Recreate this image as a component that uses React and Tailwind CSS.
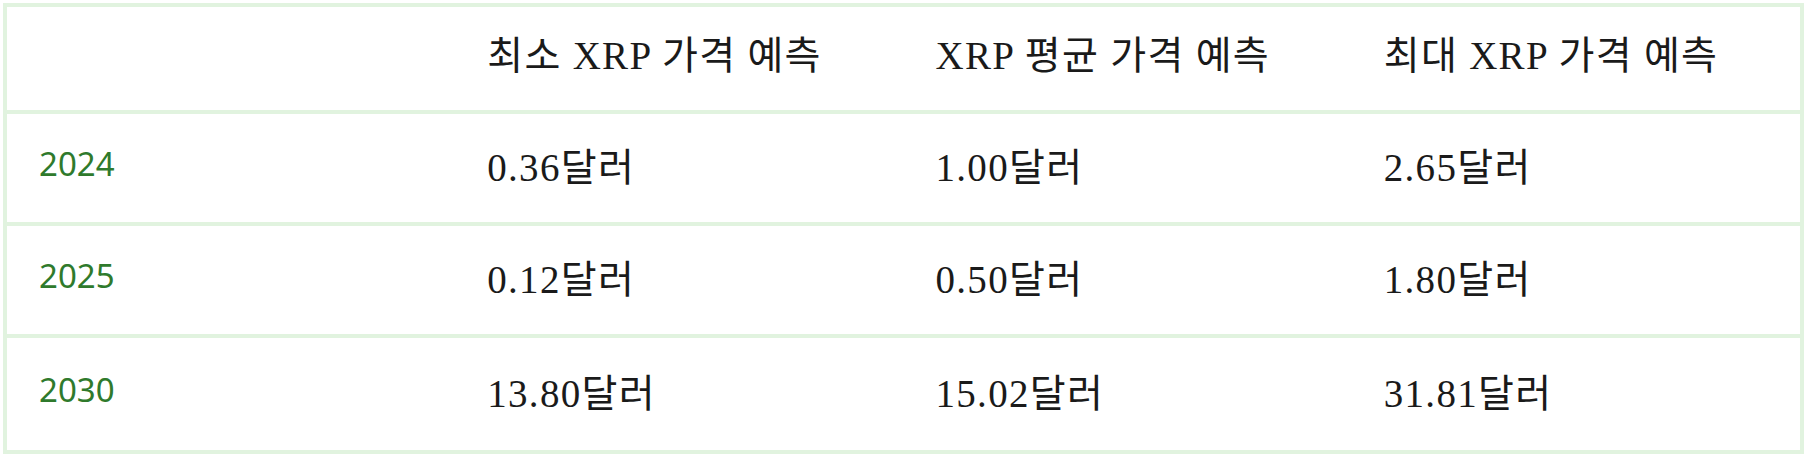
import React from "react";

const rows = [
  { year: "2024", min: "0.36달러", avg: "1.00달러", max: "2.65달러", h: "h-[112px]" },
  { year: "2025", min: "0.12달러", avg: "0.50달러", max: "1.80달러", h: "h-[112px]" },
  { year: "2030", min: "13.80달러", avg: "15.02달러", max: "31.81달러", h: "h-[112px]" },
];

const serif =
  "font-['Liberation_Serif','Noto_Sans_CJK_KR',serif] text-[39px] leading-none tracking-[1.3px] text-[#1a1a1a]";

const Cell = ({ children, className = "" }) => (
  <div className={`flex items-center pl-8 ${className}`}>{children}</div>
);

const App = () => {
  return (
    <div className="min-h-screen bg-white p-[3px]">
      <div className="border-4 border-[#e1f3df] divide-y-4 divide-[#e1f3df]">
        {/* header */}
        <div className={`grid grid-cols-4 h-[107px] ${serif}`}>
          <Cell className="pb-[6px]" />
          <Cell className="pb-[6px]">최소 XRP 가격 예측</Cell>
          <Cell className="pb-[6px]">XRP 평균 가격 예측</Cell>
          <Cell className="pb-[6px]">최대 XRP 가격 예측</Cell>
        </div>

        {rows.map((r) => (
          <div key={r.year} className={`grid grid-cols-4 ${r.h}`}>
            <Cell className="pt-[4px] pb-[14px] font-['Noto_Sans',sans-serif] text-[33px] leading-none text-[#2f7a2c]">
              {r.year}
            </Cell>
            <Cell className={`pt-[4px] pb-[6px] ${serif}`}>{r.min}</Cell>
            <Cell className={`pt-[4px] pb-[6px] ${serif}`}>{r.avg}</Cell>
            <Cell className={`pt-[4px] pb-[6px] ${serif}`}>{r.max}</Cell>
          </div>
        ))}
      </div>
    </div>
  );
};

export default App;
